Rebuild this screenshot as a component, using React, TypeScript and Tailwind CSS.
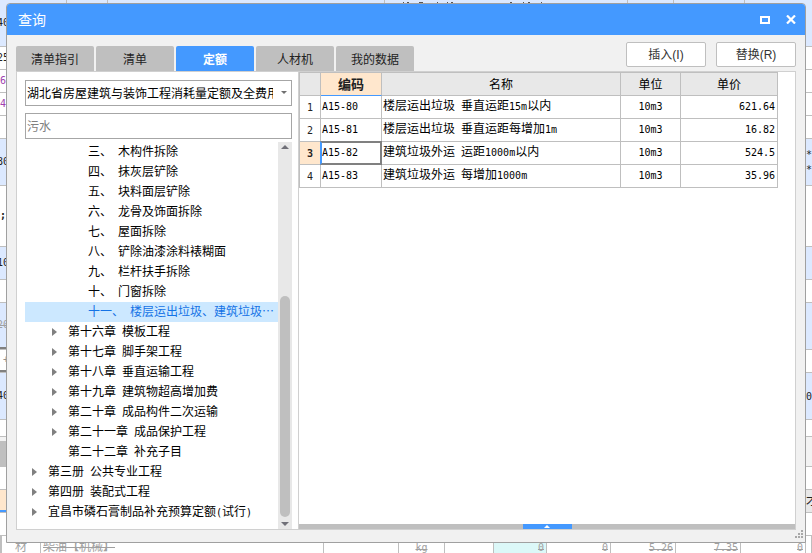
import { Fragment, useState } from 'react'

type TreeItem = {
  label: string
  level: 1 | 2 | 3
  expandable?: boolean
}

type QuotaRow = {
  code: string
  name: string
  unit: string
  price: string
}

type SheetRow = {
  height: string
  tone?: string
  left?: string
  leftClass?: string
  right?: string
}

const tabs = ['清单指引', '清单', '定额', '人材机', '我的数据']

const tree: TreeItem[] = [
  { label: '三、 木构件拆除', level: 3 },
  { label: '四、 抹灰层铲除', level: 3 },
  { label: '五、 块料面层铲除', level: 3 },
  { label: '六、 龙骨及饰面拆除', level: 3 },
  { label: '七、 屋面拆除', level: 3 },
  { label: '八、 铲除油漆涂料裱糊面', level: 3 },
  { label: '九、 栏杆扶手拆除', level: 3 },
  { label: '十、 门窗拆除', level: 3 },
  { label: '十一、 楼层运出垃圾、建筑垃圾⋯', level: 3 },
  { label: '第十六章 模板工程', level: 2, expandable: true },
  { label: '第十七章 脚手架工程', level: 2, expandable: true },
  { label: '第十八章 垂直运输工程', level: 2, expandable: true },
  { label: '第十九章 建筑物超高增加费', level: 2, expandable: true },
  { label: '第二十章 成品构件二次运输', level: 2, expandable: true },
  { label: '第二十一章 成品保护工程', level: 2, expandable: true },
  { label: '第二十二章 补充子目', level: 2 },
  { label: '第三册 公共专业工程', level: 1, expandable: true },
  { label: '第四册 装配式工程', level: 1, expandable: true },
  { label: '宜昌市磷石膏制品补充预算定额(试行)', level: 1, expandable: true },
]

const indent = {
  1: 'pl-[7px]',
  2: 'pl-[27px]',
  3: 'pl-[47px]',
}

const rows: QuotaRow[] = [
  { code: 'A15-80', name: '楼层运出垃圾 垂直运距15m以内', unit: '10m3', price: '621.64' },
  { code: 'A15-81', name: '楼层运出垃圾 垂直运距每增加1m', unit: '10m3', price: '16.82' },
  { code: 'A15-82', name: '建筑垃圾外运 运距1000m以内', unit: '10m3', price: '524.5' },
  { code: 'A15-83', name: '建筑垃圾外运 每增加1000m', unit: '10m3', price: '35.96' },
]

const sheetRows: SheetRow[] = [
  { height: 'h-[23px]', left: '25' },
  { height: 'h-[23px]', left: '6', leftClass: 'text-[#a040b0] justify-start' },
  { height: 'h-[23px]', left: '4', leftClass: 'text-[#a040b0] justify-start' },
  { height: 'h-[23px]' },
  { height: 'h-[47px]', tone: 'bg-[#dce9ff]', left: '80', right: '* *' },
  { height: 'h-[61px]', left: ';', leftClass: 'justify-start font-bold' },
  { height: 'h-[33px]', tone: 'bg-[#dce9ff]', left: '10' },
  { height: 'h-[23px]' },
  { height: 'h-[47px]', tone: 'bg-[#dce9ff]', left: '20', leftClass: 'text-[#a0a0a0] line-through border-b-2 border-[#808080]' },
  { height: 'h-[23px]', left: '+', leftClass: 'text-[#909090] border-b-2 border-[#808080]' },
  { height: 'h-[47px]', tone: 'bg-[#dce9ff]', left: '40', right: '0' },
  { height: 'h-[17px]' },
  { height: 'h-[30px]', tone: 'bg-[#f3f3f3]', leftClass: 'bg-[#bfbfbf] border-t-4 border-[#f3f3f3]' },
  { height: 'h-[23px]' },
  { height: 'h-[23px]', tone: 'bg-[#e8e8e8]', leftClass: 'bg-[#ffe7cd] border-b-2 border-[#4499ff]', right: '才' },
  { height: 'h-[23px]' },
]

// Latin runs are set half as wide as a Chinese character
function Mixed({ text }: { text: string }) {
  return (
    <>
      {text.split(/([\x20-\x7e]+)/).map((part, i) =>
        i % 2 ? (
          <span key={i} className="whitespace-pre font-['DejaVu_Sans_Mono',monospace] text-[10px]">
            {part}
          </span>
        ) : (
          <Fragment key={i}>{part}</Fragment>
        )
      )}
    </>
  )
}

function Sheet() {
  return (
    <div aria-hidden="true" className="flex min-h-screen flex-col text-[#222]">
      <div className="flex h-[47px] border-b border-[#bfbfbf] bg-[#dce9ff]">
        <div className="flex w-[67px] items-center border-r border-[#bfbfbf]">
          <div className="flex w-[9px] justify-end">
            <Mixed text="40" />
          </div>
        </div>
        <div className="w-[41px] border-r border-[#bfbfbf]" />
        <div className="w-[277px] border-r border-[#bfbfbf]" />
        <div className="flex-1 border-r border-[#bfbfbf] pl-[17px]">
          <svg width="150" height="3" className="fill-[#555]">
            <path d="M1 2h1v1h-1zM5 2h2v1h-2zM17 2h4v1h-4zM35 2h1v1h-1zM45 2h1v1h-1zM49 2h2v1h-2zM108 2h2v1h-2zM121 2h1v1h-1zM126 2h2v1h-2zM139 2h1v1h-1z" />
          </svg>
        </div>
        <div className="w-[46px] border-r border-[#bfbfbf]" />
        <div className="w-[71px] border-r border-[#bfbfbf]" />
        <div className="w-[67px]" />
      </div>
      {sheetRows.map((row, i) => (
        <div key={i} className={`flex justify-between border-b border-[#bfbfbf] ${row.height} ${row.tone ?? 'bg-white'}`}>
          <div className={`flex w-[9px] items-center justify-end ${row.leftClass ?? ''}`}>
            <Mixed text={row.left ?? ''} />
          </div>
          <div className="flex w-[6px] flex-col justify-center leading-[14px]">
            {(row.right ?? '').split(' ').map((mark, j) => (
              <span key={j}>
                <Mixed text={mark} />
              </span>
            ))}
          </div>
        </div>
      ))}
      <div className="flex flex-1 bg-white leading-[23px] text-[#a0a0a0] *:h-[17px] *:border-r *:border-[#bfbfbf]">
        <div className="w-[41px] border-l-2 border-l-[#808080] pl-[13px]">材</div>
        <div className="flex-1 pl-[2px] line-through">柴油【机械】</div>
        <div className="w-[75px]" />
        <div className="w-[46px] text-center line-through"><Mixed text="kg" /></div>
        <div className="w-[49px]" />
        <div className="w-[53px] bg-[#dcf8f8] pr-[2px] text-right line-through"><Mixed text="0" /></div>
        <div className="w-[64px] pr-[2px] text-right line-through"><Mixed text="0" /></div>
        <div className="w-[65px] pr-[2px] text-right line-through"><Mixed text="5.26" /></div>
        <div className="w-[65px] pr-[2px] text-right line-through"><Mixed text="7.35" /></div>
        <div className="w-[65px] pr-[2px] text-right line-through"><Mixed text="0" /></div>
        <div className="w-[6px]" />
      </div>
    </div>
  )
}

function QuotaTree() {
  const [selected, setSelected] = useState(8)

  return (
    <div className="mt-[3px] flex min-h-0 flex-1">
      <ul className="min-w-0 flex-1 overflow-hidden">
        {tree.map((item, i) => (
          <li key={item.label}>
            <button
              type="button"
              onClick={() => setSelected(i)}
              className={`flex h-5 w-full items-center whitespace-nowrap ${indent[item.level]} ${
                i === selected ? 'bg-[#cce8ff] text-[#1473e6]' : 'text-black'
              }`}
            >
              <span className="w-4 shrink-0">
                {item.expandable && (
                  <svg width="5" height="8" viewBox="0 0 5 8" className="fill-[#808080]">
                    <path d="M0 0l5 4l-5 4z" />
                  </svg>
                )}
              </span>
              <span className="leading-5">
                <Mixed text={item.label} />
              </span>
            </button>
          </li>
        ))}
      </ul>
      <div className="flex w-[14px] flex-col items-center bg-[#e8e8e8] py-[3px]">
        <svg width="8" height="4" viewBox="0 0 8 4" className="fill-[#707078]">
          <path d="M0 4l4-4l4 4z" />
        </svg>
        <div className="flex-[147]" />
        <div className="w-[10px] flex-[221] rounded-full bg-[#bfbfbf]" />
        <svg width="8" height="4" viewBox="0 0 8 4" className="mt-[5px] fill-[#707078]">
          <path d="M0 0l4 4l4-4z" />
        </svg>
      </div>
    </div>
  )
}

function QuotaTable() {
  return (
    <table className="w-full table-fixed border-separate border-spacing-0 border-t border-l border-[#bfbfbf] text-black">
      <thead>
        <tr className="h-[23px] bg-[#e8e8e8] *:border-r *:border-b *:border-[#bfbfbf] *:px-0 *:pt-[2px] *:pb-0 *:font-normal">
          <th className="w-[21px]" />
          <th className="w-[61px] border-b-[#4499ff]! bg-[#ffe7cd] font-bold! text-[#222]">
            <span className="text-[13px]">编码</span>
          </th>
          <th>名称</th>
          <th className="w-[60px]">单位</th>
          <th className="w-[97px]">单价</th>
        </tr>
      </thead>
      <tbody>
        {rows.map((row, i) => {
          const active = i === 2
          return (
            <tr key={row.code} className="h-[23px] *:border-r *:border-b *:border-[#bfbfbf] *:pt-0">
              <th className={`p-0 text-[#222] ${active ? 'bg-[#ffe7cd] font-bold' : 'font-normal'}`}>
                <Mixed text={String(i + 1)} />
              </th>
              <td className="relative pb-[2px] pl-px">
                {active && (
                  <span className="absolute -inset-px border-2 border-[#808080] border-l-[#4499ff]" />
                )}
                <Mixed text={row.code} />
              </td>
              <td className="overflow-hidden pb-[2px] pl-px whitespace-nowrap">
                <Mixed text={row.name} />
              </td>
              <td className="pb-[2px] text-center">
                <Mixed text={row.unit} />
              </td>
              <td className="pr-[2px] pb-[2px] text-right">
                <Mixed text={row.price} />
              </td>
            </tr>
          )
        })}
      </tbody>
    </table>
  )
}

export default function App() {
  const [tab, setTab] = useState('定额')
  const [keyword, setKeyword] = useState('')

  return (
    <div className="relative min-h-screen overflow-hidden font-['Liberation_Sans','Noto_Sans_CJK_SC',sans-serif] text-xs">
      <Sheet />
      <section
        aria-labelledby="dialog-title"
        className="absolute inset-x-[6px] top-[3px] bottom-[10px] flex flex-col overflow-hidden rounded-t border border-[#a0a0a0] bg-[#f1f1f1]"
      >
        <header className="flex h-[31px] shrink-0 items-center justify-between bg-[#4499ff] pr-[9px] pl-[11px] text-white">
          <h1 id="dialog-title" className="text-sm">查询</h1>
          <div className="flex items-center gap-4">
            <button type="button" aria-label="最大化">
              <svg width="10" height="8" viewBox="0 0 10 8" fill="none" stroke="currentColor" strokeWidth="2">
                <path d="M1 1h8v6h-8z" />
              </svg>
            </button>
            <button type="button" aria-label="关闭">
              <svg width="10" height="9" viewBox="0 0 10 9" fill="none" stroke="currentColor" strokeWidth="2.2">
                <path d="M1 0.5l8 8M9 0.5l-8 8" />
              </svg>
            </button>
          </div>
        </header>

        <div className="flex shrink-0 items-end justify-between px-[9px] pt-[7px]">
          <div role="tablist" className="flex gap-[2px]">
            {tabs.map((name) => (
              <button
                key={name}
                type="button"
                role="tab"
                aria-selected={name === tab}
                onClick={() => setTab(name)}
                className={`h-[25px] w-[78px] rounded-t-xs pt-[2px] ${
                  name === tab ? 'bg-[#4499ff] font-bold text-white' : 'bg-[#bfbfbf] text-[#222]'
                }`}
              >
                {name}
              </button>
            ))}
          </div>
          <div className="mb-1 flex gap-[10px]">
            <button type="button" className="h-[25px] w-20 rounded-xs border border-[#bfbfbf] bg-white text-[#333]">
              插入(I)
            </button>
            <button type="button" className="h-[25px] w-20 rounded-xs border border-[#bfbfbf] bg-white text-[#333]">
              替换(R)
            </button>
          </div>
        </div>

        <div className="mx-[9px] mb-[12px] flex min-h-0 flex-1 border border-[#d0d0d0] bg-white">
          <div className="flex w-[282px] shrink-0 flex-col border-r border-[#d0d0d0] pt-2 pr-[6px] pl-2">
            <div className="relative">
              <select
                aria-label="定额库"
                className="block h-[26px] w-full appearance-none overflow-hidden border border-[#a6a6a6] bg-white pt-[2px] pr-[18px] pl-px text-clip text-black"
              >
                <option>湖北省房屋建筑与装饰工程消耗量定额及全费用基价表</option>
              </select>
              <svg width="6" height="3" viewBox="0 0 6 3" className="pointer-events-none absolute top-[11px] right-[5px] fill-[#707070]">
                <path d="M0 0h6l-3 3z" />
              </svg>
            </div>
            <input
              type="text"
              aria-label="搜索"
              placeholder="污水"
              value={keyword}
              onChange={(e) => setKeyword(e.target.value)}
              className="mt-[7px] h-[26px] w-full border border-[#a6a6a6] bg-white pt-[2px] pl-px text-black placeholder:text-[#808080]"
            />
            <QuotaTree />
          </div>

          <div className="flex min-w-0 flex-1 flex-col">
            <div className="min-h-0 flex-1 overflow-hidden pr-[17px]">
              <QuotaTable />
            </div>
            <div className="flex h-[5px] shrink-0 justify-center bg-[#bfbfbf]">
              <button type="button" aria-label="展开" className="flex w-[49px] items-center justify-center bg-[#4499ff]">
                <svg width="6" height="3" viewBox="0 0 6 3" className="fill-white">
                  <path d="M0 3l3-3l3 3z" />
                </svg>
              </button>
            </div>
          </div>
        </div>

        <svg width="8" height="8" viewBox="0 0 8 8" className="absolute right-[2px] bottom-1 fill-[#a8a8a8]">
          <path d="M6 0h2v2h-2zM3 3h2v2h-2zM6 3h2v2h-2zM0 6h2v2h-2zM3 6h2v2h-2zM6 6h2v2h-2z" />
        </svg>
      </section>
    </div>
  )
}
